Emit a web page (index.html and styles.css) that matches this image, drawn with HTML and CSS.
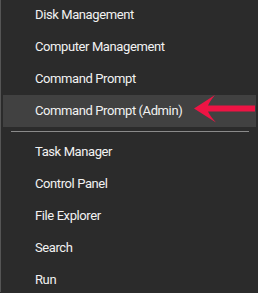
FILE: index.html
```html
<!DOCTYPE html>
<html lang="en">
<head>
    <meta charset="UTF-8">
    <meta name="viewport" content="width=device-width, initial-scale=1.0">
    <title>Power User Menu</title>
    <link rel="stylesheet" href="styles.css">
</head>
<body>

    <div class="menu">
        <div class="item">Disk Management</div>
        <div class="item">Computer Management</div>
        <div class="item">Command Prompt</div>
        <div class="item active">
            Command Prompt (Admin)
            <svg class="arrow" width="62" height="30" viewBox="0 0 62 30">
                <path d="M0 13.5 L21 0 Q16 6 14 10.5 L61 10.5 L61 16.5 L14 16.5 Q16 21 22 27.5 Z" fill="#ee1444"/>
            </svg>
        </div>
        <div class="separator"></div>
        <div class="item">Task Manager</div>
        <div class="item">Control Panel</div>
        <div class="item">File Explorer</div>
        <div class="item">Search</div>
        <div class="item">Run</div>
    </div>

</body>
</html>
```

FILE: styles.css
```css
body {
    margin: 0;
    background-color: #2b2b2b;
    font-family: Roboto, "Liberation Sans", sans-serif;
    overflow: hidden;
}
.menu {
    height: 293px;
    border-left: 1px solid #555555;
    padding: 0 2px 0 2px;
    margin-top: -1px;
}
.item {
    position: relative;
    height: 32px;
    line-height: 32px;
    padding-left: 32px;
    font-size: 13px;
    letter-spacing: -0.4px;
    color: #f2f2f2;
    white-space: nowrap;
}
.item.active {
    background-color: #414141;
}
.separator {
    height: 1px;
    background-color: #8a8a8a;
    margin: 4px 7px 4px 8px;
}
.arrow {
    position: absolute;
    left: 191px;
    top: 0;
}
```
